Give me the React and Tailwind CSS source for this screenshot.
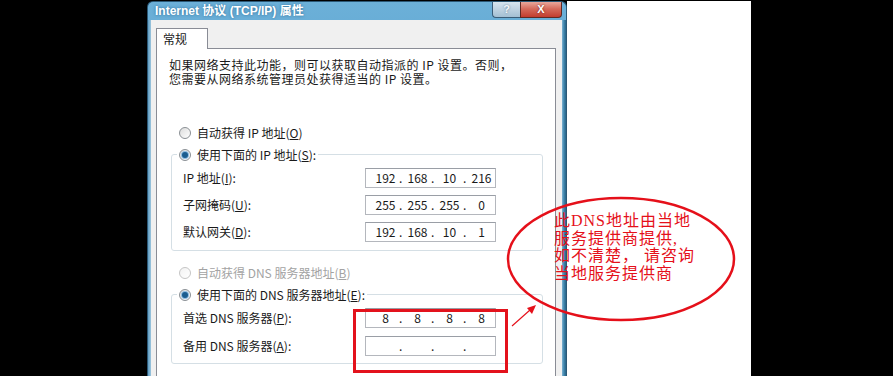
import React from 'react';

const font = "font-['Noto_Sans_CJK_SC',sans-serif]";

const Mn = ({ c }) => (
  <>
    (<span className="underline">{c}</span>)
  </>
);

const Radio = ({ checked, disabled }) => (
  <span
    className={`w-[12px] h-[12px] shrink-0 rounded-full border flex items-center justify-center bg-gradient-to-br ${
      disabled ? 'border-[#c5c5c5] from-[#f2f2f2] to-white' : 'border-[#8a8f94] from-[#dcdcdc] to-white'
    }`}
  >
    {checked && <span className="w-[6px] h-[6px] rounded-full bg-[#1c5d8f] ring-1 ring-[#8dbbe0]" />}
  </span>
);

const IpBox = ({ parts }) => (
  <div className="w-[131px] h-[20px] shrink-0 border border-[#b4b7bd] border-t-[#9a9ea6] bg-white flex items-center pl-[1px] text-[12px] text-[#1a1a1a]">
    {parts.map((p, i) => (
      <div key={i} className="w-[32px] flex items-center">
        <span className="w-[5px]">{i > 0 ? '.' : ''}</span>
        <span className="flex-1 text-center">{p}</span>
      </div>
    ))}
  </div>
);

const Row = ({ label, parts }) => (
  <div className="h-[20px] flex items-center">
    <div className="w-[193px] pl-[11px] whitespace-nowrap">{label}</div>
    <IpBox parts={parts} />
  </div>
);

const Group = ({ legend, children, rowGap, className }) => (
  <div className={`ml-[2px] w-[372px] border border-[#d5dfe5] rounded-[3px] ${className}`}>
    <div className="-mt-[8px] h-[16px] ml-[5px] px-[2px] w-fit bg-white flex items-center gap-[6px]">
      <Radio checked />
      <span className="whitespace-nowrap">{legend}</span>
    </div>
    <div className={`mt-[5px] flex flex-col ${rowGap}`}>{children}</div>
  </div>
);

const Dialog = () => (
  <div className="w-[420px] shrink-0 flex flex-col rounded-t-[6px] border border-b-0 border-[#2b5876] bg-gradient-to-b from-[#6cb0d8] via-[#4f9acb] to-[#4a95c6] overflow-hidden">
    <div className="h-[27px] flex justify-between pl-[7px] pr-[4px]">
      <span className="self-center text-[12px] font-bold text-white whitespace-nowrap font-['Liberation_Sans','Noto_Sans_CJK_SC',sans-serif] [text-shadow:0_0_3px_#2d6e98]">
        Internet 协议 (TCP/IP) 属性
      </span>
      <div className="flex -mt-px">
        <div className="w-[28px] h-[17px] rounded-bl-[4px] border border-t-0 border-r-0 border-[#3b5d78] bg-gradient-to-b from-[#dbe8f1] to-[#a4bfd3] flex items-center justify-center text-[11px] font-bold text-[#f4f8fb] font-['Liberation_Sans',sans-serif] [text-shadow:0_0_2px_#55708a]">
          ?
        </div>
        <div className="w-[42px] h-[17px] rounded-br-[4px] border border-t-0 border-[#5e2a24] bg-gradient-to-b from-[#eab0a5] via-[#d4695a] to-[#c23c2e] flex items-center justify-center text-[11px] font-bold text-white font-['Liberation_Sans',sans-serif] [text-shadow:0_0_2px_#6a1b12]">
          X
        </div>
      </div>
    </div>
    <div className="flex flex-1">
      <div className="w-[3px] bg-gradient-to-r from-[#5f9cc2] to-[#9cc6de]" />
      <div className={`flex-1 bg-[#f0f0f0] pt-[8px] pl-[5px] pr-[6px] text-[12px] text-[#1a1a1a] ${font}`}>
        <div className="relative z-10 -mb-px w-[52px] h-[21px] bg-white border border-b-0 border-[#898c95] flex items-center pl-[6px]">
          常规
        </div>
        <div className="h-[400px] bg-white border border-[#898c95] pl-[12px]">
          <div className="pt-[9px] leading-[14px] tracking-[0.5px] whitespace-nowrap">
            <div className="h-[14px]">如果网络支持此功能，则可以获取自动指派的 IP 设置。否则，</div>
            <div className="h-[14px]">您需要从网络系统管理员处获得适当的 IP 设置。</div>
          </div>
          <div className="mt-[39px] h-[16px] ml-[10px] flex items-center gap-[6px]">
            <Radio />
            <span>
              自动获得 IP 地址<Mn c="O" />
            </span>
          </div>
          <Group
            className="mt-[13px] pb-[8px]"
            rowGap="gap-[7px]"
            legend={
              <>
                使用下面的 IP 地址<Mn c="S" />:
              </>
            }
          >
            <Row label={<>IP 地址<Mn c="I" />:</>} parts={['192', '168', '10', '216']} />
            <Row label={<>子网掩码<Mn c="U" />:</>} parts={['255', '255', '255', '0']} />
            <Row label={<>默认网关<Mn c="D" />:</>} parts={['192', '168', '10', '1']} />
          </Group>
          <div className="mt-[14px] h-[16px] ml-[10px] flex items-center gap-[6px] text-[#a3a3a3]">
            <Radio disabled />
            <span>
              自动获得 DNS 服务器地址<Mn c="B" />
            </span>
          </div>
          <Group
            className="mt-[13px] pb-[7px]"
            rowGap="gap-[8px]"
            legend={
              <>
                使用下面的 DNS 服务器地址<Mn c="E" />:
              </>
            }
          >
            <Row label={<>首选 DNS 服务器<Mn c="P" />:</>} parts={['8', '8', '8', '8']} />
            <Row label={<>备用 DNS 服务器<Mn c="A" />:</>} parts={['', '', '', '']} />
          </Group>
        </div>
      </div>
      <div className="w-[4px] bg-gradient-to-r from-[#7fb4d3] via-[#3f86ad] to-[#2a6488]" />
    </div>
  </div>
);

export default function App() {
  return (
    <div className="relative w-[893px] h-[376px] bg-black flex pt-px overflow-hidden">
      <div className="w-[147px] shrink-0" />
      <Dialog />
      <div className="w-[184px] shrink-0 bg-white" />

      {/* annotation over the screenshot */}
      <div className="absolute left-[353px] top-[309px] w-[155px] h-[64px] border-[3px] border-[#e3121c]" />
      <svg className="absolute inset-0 pointer-events-none" width="893" height="376">
        <ellipse cx="621" cy="259" rx="113" ry="61" fill="none" stroke="#e5101a" strokeWidth="2.5" />
        <line x1="512" y1="326" x2="530" y2="310" stroke="#e5101a" strokeWidth="1.2" />
        <polygon points="536,305 532,314 527,308" fill="#e5101a" />
      </svg>
      <div className="absolute left-[554px] top-[212px] text-[16px] leading-[17.5px] tracking-[1px] text-[#e5101a] whitespace-nowrap font-['Liberation_Serif','Noto_Sans_CJK_SC',serif]">
        此DNS地址由当地
        <br />
        服务提供商提供,
        <br />
        如不清楚， 请咨询
        <br />
        当地服务提供商
      </div>
    </div>
  );
}
